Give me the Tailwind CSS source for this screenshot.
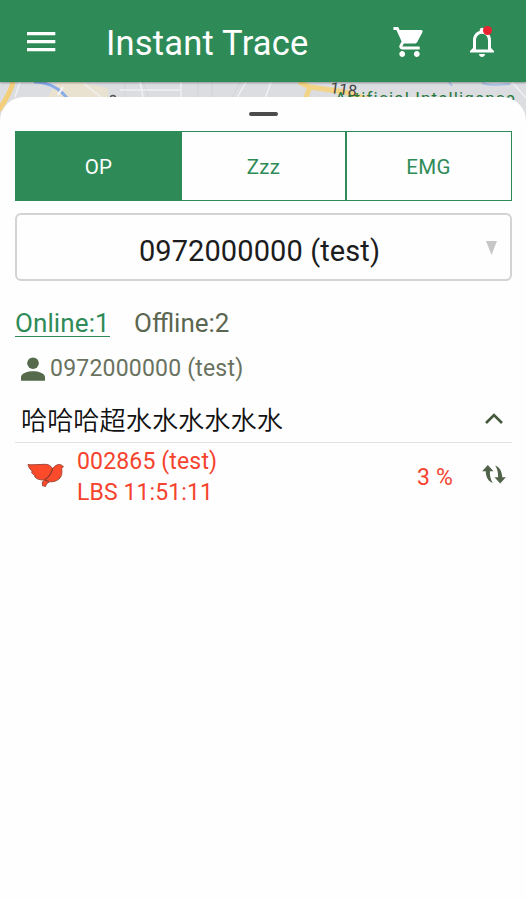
<!DOCTYPE html>
<html lang="zh-Hant">
<head>
<meta charset="utf-8">
<title>Instant Trace</title>
<script src="https://cdn.jsdelivr.net/npm/@tailwindcss/browser@4"></script>
</head>
<body class="h-[900px] w-[526px] overflow-hidden bg-[#fefefe] font-['Roboto','Noto_Sans_CJK_TC',sans-serif]">
<div class="relative flex h-[900px] flex-col">
  <header class="relative z-10 flex h-[82px] shrink-0 items-center bg-[#2e8b57] pt-[2px] text-white shadow-[0_1px_2px_rgba(0,0,0,0.35)]">
    <svg class="ml-[27px] h-[20px] w-[29px]" viewBox="0 0 29 20" fill="currentColor"><path d="M0 0h28.300v3.200H0zM0 8h28.300v3.200H0zM0 16h28.300v3.200H0z"/></svg>
    <h1 class="ml-[50px] mt-[1px] w-[286px] whitespace-nowrap text-[34.500px] leading-[42px] tracking-[0.200px]">Instant Trace</h1>
    <svg class="h-[36px] w-[35px]" viewBox="0 0 24 24" preserveAspectRatio="none" fill="currentColor"><path d="M7 18c-1.100 0-1.990.9-1.990 2S5.900 22 7 22s2-.9 2-2-.9-2-2-2zM1 2v2h2l3.600 7.590-1.350 2.450c-.16.280-.25.610-.25.960 0 1.100.9 2 2 2h12v-2H7.420c-.14 0-.25-.11-.25-.25l.03-.12.9-1.630h7.450c.75 0 1.410-.41 1.750-1.030l3.580-6.490A1 1 0 0 0 20 4H5.210l-.94-2H1zm16 16c-1.100 0-1.990.9-1.990 2s.89 2 1.990 2 2-.9 2-2-.9-2-2-2z"/></svg>
    <div class="relative ml-[37px]">
      <svg class="h-[36px] w-[36px]" viewBox="0 0 24 24" fill="currentColor"><path d="M12 22c1.100 0 2-.9 2-2h-4c0 1.100.9 2 2 2zm6-6v-5c0-3.070-1.630-5.640-4.500-6.320V4c0-.83-.67-1.500-1.500-1.500s-1.500.67-1.500 1.500v.68C7.640 5.360 6 7.920 6 11v5l-2 2v1h16v-1l-2-2zm-2 1H8v-6c0-2.480 1.510-4.500 4-4.500s4 2.020 4 4.500v6z"/></svg>
      <span class="absolute left-[19px] top-[2px] size-[9px] rounded-full bg-[#e92431]"></span>
    </div>
  </header>

  <div class="relative h-[15px] shrink-0">
    <svg class="absolute left-0 top-0 h-[45px] w-[526px]" viewBox="0 82 526 45" fill="none">
      <path fill="#dcdde1" d="M0 82h526v45H0z"/>
      <path fill="#eae2d0" d="M58 82h20l30 6v9H48z"/>
      <path stroke="#d0d2d6" d="M125 82v20M143 82l8 20M198 82v20M212 82v15M240 82l-9 18"/>
      <path stroke="#f0f0f3" stroke-width="1.500" d="M84 84l17 13M20 82l-5 15M120 90h60M181 82v15M246 82l-9 16M140 82l3 15M271 82l-6 17M512 82l14 16"/>
      <path stroke="#f3cf7c" stroke-width="5" d="M13 82C11 92 5 101-1 110"/>
      <path stroke="#f3d386" stroke-width="5" d="M299 82l11 5 35 5 22 7M310 86l-4 12"/>
      <path stroke="#87ace9" stroke-width="3" d="M34 82c14 0 25 6 33 16"/>
      <path stroke="#a9c0e6" stroke-width="2" d="M449 82l3 4M482 83c8 3 18 2 28 1"/>
      <path stroke="#f6f6f8" stroke-width="2" d="M63 87l-5 8"/>
      <circle cx="113" cy="98" r="2.500" stroke="#555" stroke-width="1.500"/>
    </svg>
    <span class="absolute left-[330px] top-[-1px] rotate-[8deg] text-[16px] leading-[18px] text-[#444]">118</span>
    <span class="absolute left-[335px] top-[6px] whitespace-nowrap text-[17px] leading-[20px] tracking-[1.150px] text-[#27783c]">Artificial Intelligence</span>
  </div>

  <main class="relative flex grow flex-col rounded-t-[24px] bg-[#fefefe] px-[15px]">
    <div class="mx-auto mt-[15px] h-[4px] w-[29px] rounded-full bg-[#4c4c4c]"></div>

    <div class="mt-[15px] flex h-[70px] w-[497px] text-[20.500px] tracking-[0.300px] text-[#2e8b57]">
      <div class="flex w-[167px] items-center justify-center bg-[#2e8b57] pt-[3px] text-white">OP</div>
      <div class="flex w-[164px] items-center justify-center border-y border-r border-[#2e8b57] pt-[3px]">Zzz</div>
      <div class="flex w-[166px] items-center justify-center border border-[#2e8b57] pt-[3px] pr-[1px]">EMG</div>
    </div>

    <div class="relative mt-[12px] flex h-[68px] w-[497px] items-center justify-center rounded-[6px] border-2 border-[#d3d3d3] pr-[8px] pt-[10px] text-[29px] text-[#1c1c1c]">
      <span class="whitespace-nowrap tracking-[0.100px]">0972000000 (test)</span>
      <svg class="absolute right-[13px] top-[26px] h-[14px] w-[11px]" viewBox="0 0 11 14" fill="#c6c6c6"><path d="M0 0h11L5.500 14z"/></svg>
    </div>

    <div class="mt-[26px] flex h-[32px] items-start text-[26px] leading-[32px]">
      <span class="h-[30px] w-[95px] whitespace-nowrap border-b border-[#2e8b57] tracking-[0.100px] text-[#2e8b57]">Online:1</span>
      <span class="ml-[24px] whitespace-nowrap text-[#5b6650]">Offline:2</span>
    </div>

    <div class="mt-[15px] flex h-[30px] items-center text-[23px] text-[#69725f]">
      <svg class="ml-[6px] -mt-[1px] h-[24px] w-[24px]" viewBox="0 0 24 24" fill="#556b4b"><circle cx="12" cy="6.200" r="5.800"/><path d="M0 23.800V20c0-4 7-5.800 12-5.800S24 16 24 20v3.800z"/></svg>
      <span class="ml-[5px] whitespace-nowrap tracking-[0.200px]">0972000000 (test)</span>
    </div>

    <div class="mt-[16px] flex h-[43px] w-[497px] items-center justify-between border-b border-[#e2e2e2] pl-[6px] pr-[9px] text-[26.200px] text-[#111]">
      <span class="-mt-[5px] whitespace-nowrap font-['Noto_Sans_CJK_TC',sans-serif] font-[350] leading-[36px]">哈哈哈超水水水水水水</span>
      <svg class="-mt-[5px] h-[11px] w-[18px]" viewBox="0 0 18 11" fill="none" stroke="#46583c" stroke-width="2.600"><path d="M1 10l8-8 8 8"/></svg>
    </div>

    <div class="flex h-[66px] w-[497px] items-center text-[23px] text-[#f5432e]">
      <svg class="ml-[12px] -mt-[3px] h-[26px] w-[38px]" viewBox="0 0 38 26" fill="#fb4b2b" stroke="#8a3a2c" stroke-width="0.800" stroke-linejoin="round"><path d="M1 2.500l3 .3L18 2.300c4 0 6 1.700 7.500 4.200C28 4 29.500 2.500 32 2.500c1.700 0 3 .7 4.500 2.200L34.700 6.500c.5 4 .3 8-2.700 10.500-3 2.500-6 3-9.500 2.800L19.500 22l-1 2.500-3-.8-.2-3.700 2.200-2c-4 .3-8-.7-10-3.500l1.500-.5C6.500 13 5 11.700 4.500 9.800L5.800 9.300C3 7.500 1.500 5.500 1 2.500z"/><path fill="none" stroke-width="1.300" d="M25.500 6.500c-.8 4.500-3 8-7.700 11.200M17.800 18l4 1.500"/></svg>
      <div class="ml-[12px] flex w-[340px] flex-col whitespace-nowrap pt-[1px] leading-[31px]">
        <span class="tracking-[0.150px]">002865 (test)</span>
        <span class="tracking-[0.100px]">LBS 11:51:11</span>
      </div>
      <span class="w-[65px] whitespace-nowrap pt-[4px] tracking-[0.200px]">3 %</span>
      <svg class="-mt-[3px] h-[19px] w-[24px]" viewBox="0 0 25 20" fill="#50634a"><path d="M6 0l6 6.500H8.200c-.2 4.500.6 8.500 3 12.500C6.500 17 4 13 3.800 6.500H0zM19 19.500L13 13h3.800c.2-4.500-.6-8.500-3-12.500 4.700 2 7.200 6 7.400 12.500H25z"/></svg>
    </div>
  </main>
</div>
</body>
</html>
